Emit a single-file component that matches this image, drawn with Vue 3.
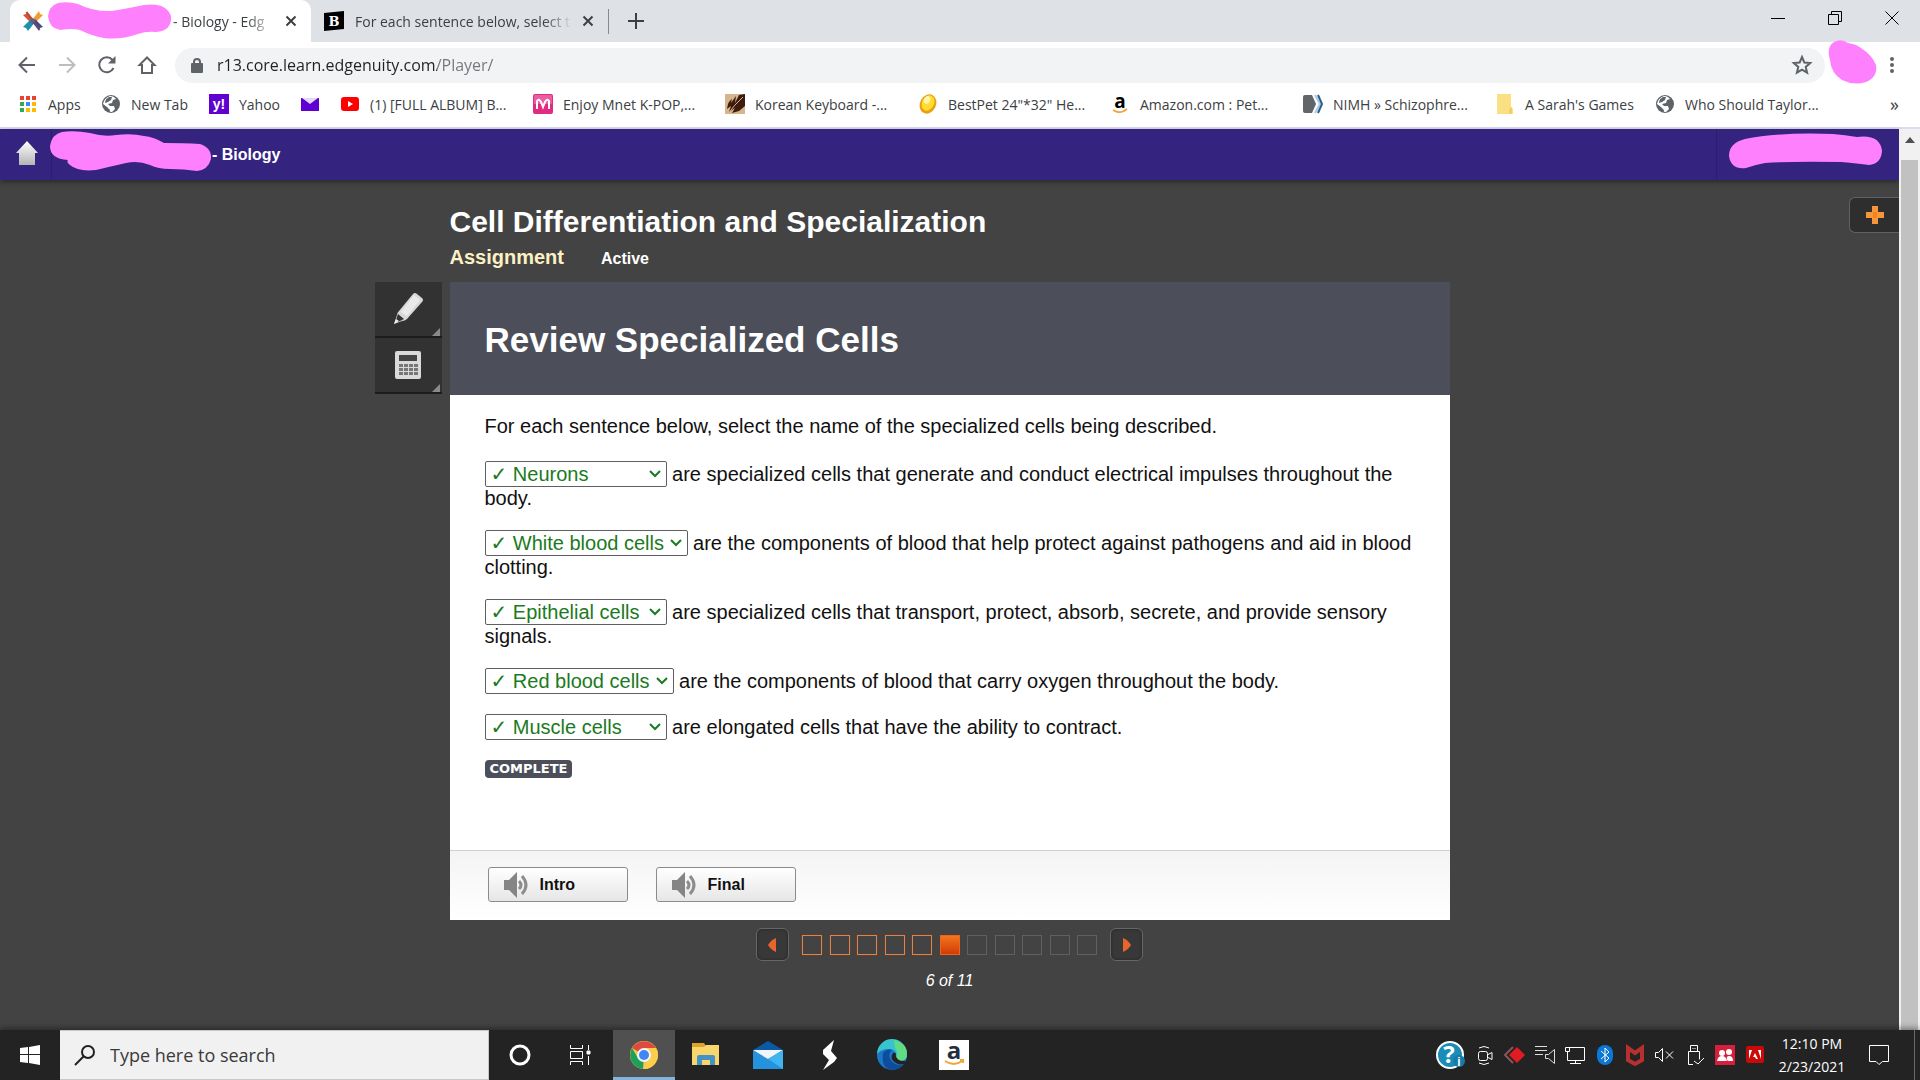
<template>
  <div class="screen">
    <div class="tabs">
      <div class="tab tab--active">
        <svg class="tab__icon" width="22" height="22" viewBox="0 0 22 22">
          <path d="M1 5l3-1 1-3 7 9-3 3z" fill="#d9532f" />
          <path d="M17 1l1 3 3 1-8 8-3-3z" fill="#f39a35" />
          <path d="M1 17l8-8 4 3-7 9-2-3z" fill="#1f8fae" />
          <path d="M10 12l3-3 8 8-3 1-1 3z" fill="#4a4b7c" />
          <path d="M4 2l14 18" stroke="#8a4660" />
          <path d="M9 9l2-1 2 3-2 3-3-2z" fill="#5d5f86" />
        </svg>
        <svg class="blob blob--tab" width="124" height="38" viewBox="0 0 124 38">
          <path
            d="M10 1Q20-1 30 2Q46 10 64 9Q82 6 96 3Q118 0 123 14Q124 29 108 30Q98 29 90 32Q72 38 56 36Q44 34 32 28Q24 26 12 28Q1 26 0 14Q1 4 10 1z"
          />
        </svg>
        <span class="tab__title tab__title--first">- Biology - Edg</span>
        <button class="icon__btn tab__close" aria-label="Close Biology tab">
          <svg width="12" height="12" viewBox="0 0 12 12">
            <path d="M1.500 1.500l9 9M10.500 1.500l-9 9" stroke="#3c4043" stroke-width="2" />
          </svg>
        </button>
      </div>
      <div class="tab">
        <svg class="tab__icon" width="22" height="22" viewBox="0 0 22 22">
          <path d="M1 3l20-2v18l-20 2z" fill="#000" />
          <text x="11" y="16" class="glyph glyph--slab" fill="#fff">B</text>
        </svg>
        <span class="tab__title">For each sentence below, select t</span>
        <button class="icon__btn tab__close" aria-label="Close search tab">
          <svg width="12" height="12" viewBox="0 0 12 12">
            <path d="M1.500 1.500l9 9M10.500 1.500l-9 9" stroke="#3c4043" stroke-width="2" />
          </svg>
        </button>
      </div>
      <button class="icon__btn tab__new" aria-label="New tab">
        <svg width="16" height="16" viewBox="0 0 16 16">
          <path d="M8 0v16M0 8h16" stroke="#3c4043" stroke-width="2" />
        </svg>
      </button>
      <div class="window__controls">
        <button class="icon__btn" aria-label="Minimize">
          <svg width="14" height="14" viewBox="0 0 14 14">
            <path d="M0 7.500h14" stroke="#000" />
          </svg>
        </button>
        <button class="icon__btn" aria-label="Restore">
          <svg width="14" height="14" viewBox="0 0 14 14" fill="none" stroke="#000">
            <path d="M.5 3.500h10v10h-10zM3.500 3v-2.500h10v10h-3" />
          </svg>
        </button>
        <button class="icon__btn" aria-label="Close window">
          <svg width="14" height="14" viewBox="0 0 14 14">
            <path d="M.5.5l13 13M13.500.5l-13 13" stroke="#000" />
          </svg>
        </button>
      </div>
    </div>

    <div class="toolbar">
      <button class="icon__btn nav__btn" aria-label="Back">
        <svg width="18" height="18" viewBox="0 0 18 18" fill="none" stroke="#5f6368" stroke-width="2">
          <path d="M17 9H2M9 1.500L1.500 9 9 16.500" />
        </svg>
      </button>
      <button class="icon__btn nav__btn" aria-label="Forward">
        <svg width="18" height="18" viewBox="0 0 18 18" fill="none" stroke="#bcbfc2" stroke-width="2">
          <path d="M1 9h15M9 1.500L16.500 9 9 16.500" />
        </svg>
      </button>
      <button class="icon__btn nav__btn" aria-label="Reload">
        <svg width="18" height="18" viewBox="0 0 18 18" fill="none">
          <path d="M15.500 12A7.500 7.500 0 1 1 14.500 4" stroke="#5f6368" stroke-width="2" />
          <path d="M17.500 0v7.500H10z" fill="#5f6368" />
        </svg>
      </button>
      <button class="icon__btn nav__btn" aria-label="Home">
        <svg width="18" height="18" viewBox="0 0 18 18" fill="none" stroke="#5f6368" stroke-width="2">
          <path d="M9 1.500L1.500 9H4v8h10V9h2.500z" />
        </svg>
      </button>
      <div class="omnibox">
        <svg width="12" height="15" viewBox="0 0 12 15">
          <rect y="5" width="12" height="10" rx="1" fill="#5f6368" />
          <path d="M3 6V4a3 3 0 0 1 6 0v2" fill="none" stroke="#5f6368" stroke-width="2" />
        </svg>
        <input v-model="url" class="omnibox__input" type="text" aria-label="Address" spellcheck="false" />
        <button class="icon__btn" aria-label="Bookmark this page">
          <svg width="20" height="20" viewBox="0 0 20 20">
            <path
              d="M10 2l2.300 5.500 5.900.5-4.500 3.900 1.400 5.800L10 14.600l-5.100 3.100 1.400-5.800L1.800 8l5.900-.5z"
              fill="none"
              stroke="#5f6368"
              stroke-width="2"
            />
          </svg>
        </button>
      </div>
      <svg class="blob blob--avatar" width="50" height="44" viewBox="0 0 50 44">
        <path d="M6 2Q13-2 20 3Q28 4 33 8Q44 15 48 25Q50 37 38 42Q26 46 14 40Q3 33 2 20Q-2 7 6 2z" />
      </svg>
      <button class="icon__btn" aria-label="Menu">
        <svg width="6" height="18" viewBox="0 0 6 18" fill="#5f6368">
          <circle cx="3" cy="3" r="2" />
          <circle cx="3" cy="9" r="2" />
          <circle cx="3" cy="15" r="2" />
        </svg>
      </button>
    </div>

    <nav class="bookmarks">
      <a
        v-for="mark in bookmarks"
        :key="mark.icon + mark.text"
        class="bookmark"
        href="#"
        :aria-label="mark.text || 'Mail'"
        :style="{ width: mark.width + 'px' }"
      >
        <svg class="bookmark__icon" width="20" height="20" viewBox="0 0 20 20">
          <template v-if="mark.icon == 'apps'">
            <rect v-for="(c, i) in appColors" :key="i" :x="2 + (i % 3) * 6" :y="2 + Math.floor(i / 3) * 6" width="4" height="4" :fill="c" />
          </template>
          <template v-else-if="mark.icon == 'globe'">
            <circle cx="10" cy="10" r="9" fill="#5f6368" />
            <path d="M9 2q4 0 6 3l-3 1-1 3-4 1 2 2h4l1 3-3 3q-3 0-2-2l-3-3-4-3q1-6 7-8z" fill="#fff" />
            <path d="M8 3h3l-1 3-3 2-3 1q0-4 4-6z" fill="#5f6368" />
          </template>
          <template v-else-if="mark.icon == 'yahoo'">
            <rect width="20" height="20" fill="#5f01d1" />
            <text x="10" y="15" class="glyph glyph--y" fill="#fff">y!</text>
          </template>
          <template v-else-if="mark.icon == 'mail'">
            <path d="M1 4h18v13H1z" fill="#5f01d1" />
            <path d="M2 4h16l-8 6z" fill="#e4d8f8" />
          </template>
          <template v-else-if="mark.icon == 'youtube'">
            <rect x="1" y="3" width="18" height="14" rx="3" fill="#f00" />
            <path d="M8 7l5 3-5 3z" fill="#fff" />
          </template>
          <template v-else-if="mark.icon == 'mnet'">
            <rect width="20" height="20" rx="2" fill="#e12a82" />
            <rect x="1" y="1" width="18" height="9" rx="1" fill="#ec5ba3" />
            <path d="M4 15V7q2-3 4 1l2 5 2-5q2-4 4-1v8" fill="none" stroke="#fff" stroke-width="2" />
          </template>
          <template v-else-if="mark.icon == 'feather'">
            <rect width="20" height="20" fill="#d8b48c" />
            <path d="M20 0v12l-6 5-7 2 3-5-6 4 2-6-4 3Q3 7 7 5L6 9l5-7-1 7 4-8z" fill="#3b1c0f" />
            <path d="M3 20Q9 11 18 3" stroke="#d8b48c" fill="none" />
          </template>
          <template v-else-if="mark.icon == 'gold'">
            <ellipse cx="10" cy="10" rx="8" ry="10" fill="#e9a013" transform="rotate(28 10 10)" />
            <ellipse cx="10" cy="9" rx="6" ry="8" fill="#ffdc2e" transform="rotate(28 10 9)" />
            <ellipse cx="9" cy="6" rx="3" ry="4" fill="#fff6a8" transform="rotate(28 9 6)" />
          </template>
          <template v-else-if="mark.icon == 'amazon'">
            <text x="10" y="14" class="glyph glyph--a" fill="#000">a</text>
            <path d="M3 16q7 5 14-1" stroke="#f0a63a" stroke-width="2" fill="none" />
          </template>
          <template v-else-if="mark.icon == 'nimh'">
            <path d="M0 3q0-2 2-2h7l4 9-4 9H2q-2 0-2-2z" fill="#636569" />
            <path d="M12 1l5 9-5 9" fill="none" stroke="#a9cbe6" stroke-width="2" />
            <path d="M15 1l4 9-4 9" fill="none" stroke="#2d5d8a" stroke-width="2" />
          </template>
          <template v-else>
            <path d="M2 0h14v13l2 2v5H2z" fill="#fbe083" />
            <path d="M14 20v-5l3-2v7z" fill="#f3cf62" />
          </template>
        </svg>
        <span v-if="mark.text">{{ mark.text }}</span>
      </a>
      <button class="icon__btn bookmarks__more" aria-label="More bookmarks">»</button>
    </nav>

    <div class="viewport">
      <div class="page">
        <header class="top">
          <a class="top__home" href="#" aria-label="Home">
            <svg width="24" height="26" viewBox="0 0 24 26">
              <defs>
                <linearGradient id="silver" x1="0" y1="0" x2="0" y2="1">
                  <stop offset="0" stop-color="#fff" />
                  <stop offset="1" stop-color="#b4b4b4" />
                </linearGradient>
              </defs>
              <path d="M12 1l11 12h-3v12H4V13H1z" fill="url(#silver)" />
            </svg>
          </a>
          <svg class="blob blob--name" width="162" height="40" viewBox="0 0 162 40">
            <path
              d="M12 1Q24-1 40 2Q54 6 66 4Q82 2 94 5Q104 6 114 12Q134 12 150 13Q162 17 161 28Q158 39 147 40Q134 38 120 38Q108 38 100 34Q88 29 76 32Q58 36 46 39Q28 41 20 34Q16 31 18 29Q0 28 0 15Q2 3 12 1z"
            />
          </svg>
          <span class="top__course">- Biology</span>
          <div class="top__user">
            <svg class="blob" width="153" height="36" viewBox="0 0 153 36">
              <path d="M16 6Q50-1 104 1Q116 2 128 4Q151 1 153 18Q152 31 140 32Q124 30 112 29Q62 28 36 30Q25 32 17 35Q2 37 0 23Q0 10 16 6z" />
            </svg>
          </div>
        </header>

        <main class="lesson">
          <div class="lesson__heading">
            <h1>Cell Differentiation and Specialization</h1>
            <div class="lesson__meta">
              <strong class="lesson__type">Assignment</strong>
              <strong class="lesson__state">Active</strong>
            </div>
          </div>

          <button class="lesson__add" aria-label="Open panel">
            <svg width="18" height="18" viewBox="0 0 18 18">
              <path d="M6 0h6v6h6v6h-6v6H6v-6H0V6h6z" fill="#f3973c" />
              <path d="M7 6h4v6H7z" fill="#f58220" />
            </svg>
          </button>

          <div class="tools">
            <button class="tool" aria-label="Highlighter">
              <svg width="32" height="34" viewBox="0 0 32 34">
                <path d="M21 2q2-2 4 0l5 4q2 2 0 4L15 27q-2 2-5 2l-8 3 3-9q0-2 2-4z" fill="#d8d8d8" />
                <path d="M22 3l6 5-13 16-6-4z" fill="#e9e9e9" />
                <path d="M6 22l6 5-6 3-2-2z" fill="#333" />
                <path d="M4 27l3 2-5 3z" fill="#eee" />
              </svg>
            </button>
            <button class="tool" aria-label="Calculator">
              <svg width="28" height="30" viewBox="0 0 28 30">
                <rect x="1" y="1" width="26" height="28" rx="2" fill="#dadada" />
                <rect x="5" y="5" width="18" height="6" fill="#444" />
                <rect v-for="i in 12" :key="i" :x="5 + ((i - 1) % 4) * 5" :y="14 + Math.floor((i - 1) / 4) * 4" width="4" height="3" fill="#777" />
              </svg>
            </button>
          </div>

          <section class="panel">
            <div class="panel__header">
              <h2>Review Specialized Cells</h2>
            </div>
            <div class="panel__body">
              <p class="prompt">For each sentence below, select the name of the specialized cells being described.</p>
              <p v-for="(row, i) in rows" :key="i">
                <select v-model="row.answer" class="answer" :class="`answer--${row.size}`" :aria-label="`Answer ${i + 1}`">
                  <option v-for="name in cells" :key="name" :value="name">✓ {{ name }}</option>
                </select>
                {{ row.text }}
              </p>
              <div class="badge">COMPLETE</div>
            </div>
            <div class="panel__footer">
              <button v-for="clip in ['Intro', 'Final']" :key="clip" class="clip">
                <svg width="26" height="26" viewBox="0 0 26 26">
                  <path d="M0 8h5l8-8v26l-8-8H0z" fill="#858585" />
                  <path d="M15 9q4 4 0 8M18 4q8 9 0 18" fill="none" stroke="#8d8d8d" stroke-width="3" />
                </svg>
                {{ clip }}
              </button>
            </div>
          </section>

          <div class="pager">
            <div class="pager__row">
              <button class="pager__btn" aria-label="Previous">
                <svg width="9" height="14" viewBox="0 0 9 14"><path d="M8 0v14Q3 12 0 7q3-5 8-7z" fill="#e8662c" /></svg>
              </button>
              <div class="pager__steps">
                <button
                  v-for="step in 11"
                  :key="step"
                  class="step"
                  :class="{ 'step--done': step < current, 'step--current': step == current }"
                  :aria-label="`Go to ${step}`"
                  @click="current = step"
                ></button>
              </div>
              <button class="pager__btn" aria-label="Next">
                <svg width="9" height="14" viewBox="0 0 9 14"><path d="M1 0v14q5-2 8-7-3-5-8-7z" fill="#e8662c" /></svg>
              </button>
            </div>
            <div class="pager__count">{{ current }} of 11</div>
          </div>
        </main>
      </div>
      <div class="scrollbar">
        <svg width="21" height="31" viewBox="0 0 21 31"><path d="M6 14l5-6 5 6z" fill="#505050" /></svg>
        <div class="scrollbar__thumb"></div>
      </div>
    </div>

    <footer class="taskbar">
      <button class="icon__btn taskbar__start" aria-label="Start">
        <svg width="20" height="20" viewBox="0 0 20 20" fill="#fff">
          <path d="M0 3l8-1v7H0zM9 2l11-2v9H9zM0 10h8v8l-8-1zM9 10h11v10L9 18z" />
        </svg>
      </button>
      <label class="search">
        <svg width="20" height="20" viewBox="0 0 20 20" fill="none" stroke="#222" stroke-width="2">
          <circle cx="13" cy="7" r="6" />
          <path d="M8.500 11.500L0 20" />
        </svg>
        <input type="text" placeholder="Type here to search" aria-label="Search" />
      </label>
      <button v-for="app in apps" :key="app" class="icon__btn app" :class="{ 'app--active': app == 'Chrome' }" :aria-label="app">
        <svg width="30" height="30" viewBox="0 0 30 30">
          <circle v-if="app == 'Cortana'" cx="15" cy="15" r="9" fill="none" stroke="#fff" stroke-width="3" />
          <g v-else-if="app == 'Task view'" fill="none" stroke="#fff">
            <path d="M3.500 5v3.500h12V5M3.500 25v-3.500h12V25M3.500 11.500h12v7h-12zM21.500 5v5M21.500 16v9" />
            <path d="M20 11h3v3h-3z" fill="#fff" />
          </g>
          <template v-else-if="app == 'Chrome'">
            <circle cx="15" cy="15" r="14" fill="#f7c948" />
            <path d="M15 15L3 8A14 14 0 0 1 27 8z" fill="#dd4b3e" />
            <path d="M15 15l-1 14A14 14 0 0 1 3 8l6 10z" fill="#1fa05a" />
            <path d="M15 8h12A14 14 0 0 1 14 29l7-11z" fill="#fbcf4b" />
            <circle cx="15" cy="15" r="7" fill="#f4f4f4" />
            <circle cx="15" cy="15" r="5" fill="#4285f4" />
          </template>
          <template v-else-if="app == 'File Explorer'">
            <path d="M1 3h12l2 3h13v6H1z" fill="#dfa32a" />
            <path d="M1 7h12l2-2h13v20H1z" fill="#f9d56e" />
            <path d="M6 25v-8q0-2 2-2h14q2 0 2 2v8h-5v-5h-8v5z" fill="#4593c4" />
          </template>
          <template v-else-if="app == 'Mail'">
            <path d="M0 10l15-9 15 9-15 12z" fill="#0a5aa5" />
            <path d="M0 10h30L15 21z" fill="#f2f5f7" />
            <path d="M0 10l15 9 15-9v19H0z" fill="#2492dd" />
            <path d="M15 19l15-9v19z" fill="#40b4ef" />
          </template>
          <path v-else-if="app == 'Swift'" d="M19 0L8 10v4l6 6-6 10 11-8 3-4-6-7z" fill="#fff" />
          <template v-else-if="app == 'Edge'">
            <circle cx="15" cy="15" r="15" fill="#1b78c8" />
            <path d="M0 14A15 15 0 0 1 30 14q0 7-7 7-5 0-5-3 2-2 1-5-2-4-7-4Q4 9 0 14z" fill="#38c4ce" />
            <path d="M17 0q13 3 13 14 0 7-7 7-5 0-5-3 5-4 0-10z" fill="#60dc86" />
            <path d="M6 13q4-5 9-3-4 3-2 9 4 7 13 6-5 6-13 5-9-3-7-17z" fill="#0f4d9c" />
            <path d="M18 18q-1-1 1-2 1 5 8 5 3 0 2 2-5 3-10 0-7-4-3-10 3-1 3 2z" fill="#232323" />
          </template>
          <template v-else>
            <rect width="30" height="30" fill="#fff" />
            <text x="15" y="19" class="glyph glyph--big" fill="#232f3e">a</text>
            <path d="M6 21q9 6 17 0M21 20h3v3" stroke="#f0a63a" stroke-width="2" fill="none" />
          </template>
        </svg>
      </button>
      <div class="tray">
        <button v-for="item in tray" :key="item" class="icon__btn tray__item" :aria-label="item">
          <svg width="30" height="30" viewBox="0 0 30 30">
            <template v-if="item == 'Help'">
              <circle cx="15" cy="15" r="13" fill="#1b8cb8" stroke="#fff" stroke-width="2" />
              <text x="14" y="23" class="glyph glyph--big" fill="#fff">?</text>
              <circle cx="24" cy="21" r="6" fill="#167ba6" />
              <text x="24" y="26" class="glyph glyph--i" fill="#fff">i</text>
            </template>
            <g v-else-if="item == 'Meet now'" fill="none" stroke="#fff">
              <rect x="8.500" y="11.500" width="9" height="9" rx="2" />
              <path d="M18 14.500l4-2v7l-4-2M9 8q5-3 10 0M9 23q5 3 10 0" />
            </g>
            <template v-else-if="item == 'Radeon'">
              <path d="M13 7l-8 8 8 8" fill="none" stroke="#8b5555" stroke-width="2" />
              <path d="M17 7l8 8-8 8-8-8z" fill="#e01b22" />
            </template>
            <path v-else-if="item == 'Sound list'" d="M5 6.500h12M5 10.500h12M5 14.500h8M15.500 14.500h3l6-5v14l-6-5h-3z" fill="none" stroke="#ddd" />
            <path v-else-if="item == 'Network'" d="M9 7.500h15.500v13h-17v-6M15.500 21v3M10 23.500h11M5.500 7.500h4v4h-4zM7.500 12v3" fill="none" stroke="#fff" />
            <template v-else-if="item == 'Bluetooth'">
              <rect x="7" y="5" width="16" height="20" rx="8" fill="#0b78d7" />
              <path d="M11 11l8 7-4 4V8l4 4-8 7" fill="none" stroke="#fff" />
            </template>
            <path v-else-if="item == 'McAfee'" d="M8 8l7 5 7-5v12l-7 4-7-4z" fill="none" stroke="#b5302f" stroke-width="4" />
            <path v-else-if="item == 'Volume'" d="M5.500 12.500h3l4-4v13l-4-4h-3zM16 11.500l7 7M23 11.500l-7 7" fill="none" stroke="#fff" />
            <path v-else-if="item == 'USB'" d="M10.500 5.500h7v6h-7zM8.500 11.500h11v8M13 24.500H8.500v-13M13 8v1M15 8v1M14 21l4 3 6-6" fill="none" stroke="#fff" />
            <template v-else-if="item == 'People'">
              <rect x="5" y="5" width="20" height="20" fill="#d51f3c" />
              <circle cx="12" cy="13" r="3" fill="#fff" />
              <circle cx="19" cy="12" r="3" fill="#fff" />
              <path d="M7 21q1-5 5-5t5 5zM17 20q-1-4 2-4 4 0 4 5h-5z" fill="#fff" />
            </template>
            <template v-else>
              <rect x="6" y="6" width="18" height="17" rx="2" fill="#c80a0a" />
              <path d="M9 19V10h3zM21 19V10h-3zM15 13l3 6h-2l-1-2h-2z" fill="#fff" />
            </template>
          </svg>
        </button>
        <div class="clock">
          <span>12:10 PM</span>
          <span>2/23/2021</span>
        </div>
        <button class="icon__btn notice" aria-label="Notifications">
          <svg width="20" height="20" viewBox="0 0 20 20">
            <path d="M.5.5h19v16h-6L10 19.500 7 16.500H.5z" fill="none" stroke="#fff" />
          </svg>
        </button>
        <div class="desktop"></div>
      </div>
    </footer>
  </div>
</template>

<script setup>
import { ref } from "vue";

const url = ref("r13.core.learn.edgenuity.com/Player/");
const current = ref(6);

const appColors = ["#ea4335", "#ea4335", "#ea4335", "#34a853", "#4285f4", "#fbbc05", "#34a853", "#fbbc05", "#fbbc05"];

const bookmarks = [
  { icon: "apps", text: "Apps", width: 83 },
  { icon: "globe", text: "New Tab", width: 108 },
  { icon: "yahoo", text: "Yahoo", width: 91 },
  { icon: "mail", text: "", width: 40 },
  { icon: "youtube", text: "(1) [FULL ALBUM] B...", width: 193 },
  { icon: "mnet", text: "Enjoy Mnet K-POP,...", width: 192 },
  { icon: "feather", text: "Korean Keyboard -...", width: 193 },
  { icon: "gold", text: 'BestPet 24"*32" He...', width: 192 },
  { icon: "amazon", text: "Amazon.com : Pet...", width: 193 },
  { icon: "nimh", text: "NIMH » Schizophre...", width: 192 },
  { icon: "folder", text: "A Sarah's Games", width: 160 },
  { icon: "globe", text: "Who Should Taylor...", width: 190 },
];

const cells = ["Neurons", "White blood cells", "Epithelial cells", "Red blood cells", "Muscle cells"];

const rows = ref([
  {
    answer: "Neurons",
    size: "small",
    text: "are specialized cells that generate and conduct electrical impulses throughout the body.",
  },
  {
    answer: "White blood cells",
    size: "large",
    text: "are the components of blood that help protect against pathogens and aid in blood clotting.",
  },
  {
    answer: "Epithelial cells",
    size: "small",
    text: "are specialized cells that transport, protect, absorb, secrete, and provide sensory signals.",
  },
  {
    answer: "Red blood cells",
    size: "medium",
    text: "are the components of blood that carry oxygen throughout the body.",
  },
  {
    answer: "Muscle cells",
    size: "small",
    text: "are elongated cells that have the ability to contract.",
  },
]);

const apps = ["Cortana", "Task view", "Chrome", "File Explorer", "Mail", "Swift", "Edge", "Amazon"];

const tray = [
  "Help",
  "Meet now",
  "Radeon",
  "Sound list",
  "Network",
  "Bluetooth",
  "McAfee",
  "Volume",
  "USB",
  "People",
  "Adobe",
];
</script>

<style>
body {
  background-color: #434343;
}
</style>

<style scoped>
* {
  box-sizing: border-box;
}

svg {
  overflow: visible;
}

.screen {
  min-height: 100vh;
  display: flex;
  flex-direction: column;
  font-family: "Open Sans", "Noto Sans", sans-serif;
  font-size: 14px;
  color: #3c4043;
}

.icon__btn {
  display: flex;
  align-items: center;
  justify-content: center;
  padding: 0;
  border: 0;
  background: none;
  font: inherit;
  color: inherit;
}

.blob {
  flex: none;
  fill: #ff80fc;
}

.glyph {
  font-family: "Liberation Sans", sans-serif;
  font-weight: bold;
  text-anchor: middle;
}
.glyph--slab {
  font-family: "DejaVu Serif", serif;
  font-size: 13px;
}
.glyph--y {
  font-size: 14px;
}
.glyph--a {
  font-family: "Open Sans", sans-serif;
  font-size: 19px;
}
.glyph--big {
  font-family: "Open Sans", sans-serif;
  font-size: 24px;
}
.glyph--i {
  font-size: 12px;
}

.tabs {
  height: 42px;
  padding-left: 10px;
  display: flex;
  background-color: #dee1e6;
}

.tab {
  width: 298px;
  padding: 0 14px 0 12px;
  display: flex;
  align-items: center;
}
.tab:nth-child(2) {
  border-right: 1px solid transparent;
  border-image: linear-gradient(transparent 10px, #85888c 10px, #85888c 33px, transparent 33px) 1;
}
.tab--active {
  width: 301px;
  background-color: #fff;
  border-radius: 10px 10px 0 0;
}
.tab__icon {
  flex: none;
}
.tab__title {
  flex: 1;
  margin-left: 10px;
  white-space: nowrap;
  -webkit-mask-image: linear-gradient(to left, transparent, #000 28px);
  mask-image: linear-gradient(to left, transparent, #000 28px);
}
.tab__title--first {
  margin-left: 1px;
}
.blob--tab {
  margin-left: 4px;
}
.tab__close {
  width: 12px;
  margin-left: 10px;
}
.tab__new {
  width: 54px;
}

.window__controls {
  margin-left: auto;
  display: flex;
}
.window__controls .icon__btn {
  width: 57px;
  height: 36px;
}

.toolbar {
  height: 46px;
  padding: 0 25px 0 7px;
  display: flex;
  align-items: center;
  background-color: #fff;
}
.nav__btn {
  width: 40px;
}
.omnibox {
  flex: 1;
  height: 35px;
  margin-left: 8px;
  padding: 0 13px 0 16px;
  display: flex;
  align-items: center;
  border-radius: 18px;
  background-color: #f1f3f4;
}
.omnibox__input {
  flex: 1;
  min-width: 0;
  margin-left: 14px;
  padding: 0;
  border: 0;
  outline: 0;
  font-family: "Open Sans", sans-serif;
  font-size: 16px;
  color: transparent;
  caret-color: #202124;
  background: linear-gradient(to right, #202124 220px, #73777b 220px);
  -webkit-background-clip: text;
  background-clip: text;
}
.blob--avatar {
  margin: -6px 11px 0 3px;
}

.bookmarks {
  height: 41px;
  padding: 0 21px 7px 18px;
  display: flex;
  align-items: center;
  background-color: #fff;
  border-bottom: 2px solid #dcdcec;
}
.bookmark {
  flex: 0 1 auto;
  display: flex;
  align-items: center;
  column-gap: 10px;
  white-space: nowrap;
  color: inherit;
  text-decoration: none;
}
.bookmark__icon {
  flex: none;
}
.bookmarks__more {
  margin-left: auto;
  font-size: 18px;
}

.viewport {
  flex: 1;
  display: flex;
}
.page {
  flex: 1;
  min-width: 0;
  font-family: "Liberation Sans", Arial, sans-serif;
  background-color: #434343;
}

.top {
  height: 51px;
  display: flex;
  align-items: center;
  background-color: #35247f;
  box-shadow: 0 2px 5px rgba(0, 0, 0, 0.4);
  color: #fff;
}
.top__home {
  width: 52px;
  height: 100%;
  padding: 11px 0 0 15px;
  border-right: 1px solid #2c1d70;
}
.blob--name {
  margin: -8px 0 0 -2px;
}
.top__course {
  font-size: 16px;
  font-weight: bold;
}
.top__user {
  width: 183px;
  height: 100%;
  margin-left: auto;
  padding: 4px 0 0 12px;
  border-left: 1px solid #2c1d70;
}

.lesson {
  padding-top: 17px;
  display: grid;
  grid-template-columns: 1fr minmax(0, 1000px) 1fr;
}
.lesson__heading {
  grid-column: 2;
  padding: 7px 0 11px;
  color: #fff;
}
.lesson__heading h1 {
  margin: 0;
  font-size: 30px;
  line-height: 36px;
}
.lesson__meta {
  margin-top: 5px;
  display: flex;
  align-items: baseline;
  column-gap: 37px;
  line-height: 24px;
}
.lesson__type {
  font-size: 20px;
  color: #fdf0c4;
}
.lesson__state {
  font-size: 16px;
}
.lesson__add {
  grid-column: 3;
  justify-self: end;
  width: 50px;
  height: 36px;
  padding: 0;
  display: flex;
  align-items: center;
  justify-content: center;
  border: 1px solid #5c6268;
  border-right: 0;
  border-radius: 6px 0 0 6px;
  background-color: #2e2e2e;
}

.tools {
  grid-column: 1;
  justify-self: end;
  align-self: start;
  width: 67px;
  margin-right: 8px;
}
.tool {
  position: relative;
  width: 100%;
  height: 56px;
  padding: 0;
  display: flex;
  align-items: center;
  justify-content: center;
  border: 0;
  border-bottom: 2px solid #1c1c1c;
  background-color: #323232;
}
.tool::after {
  content: "";
  position: absolute;
  right: 2px;
  bottom: 0;
  border: 4px solid transparent;
  border-right-color: #8a8a8a;
  border-bottom-color: #8a8a8a;
}

.panel {
  grid-column: 2;
  background-color: #fff;
  color: #111;
}
.panel__header {
  padding: 38px 35px 35px;
  background-color: #4c4f59;
  color: #fff;
}
.panel__header h2 {
  margin: 0;
  font-size: 35px;
  line-height: 40px;
}
.panel__body {
  min-height: 455px;
  padding: 20px 35px;
  font-size: 20px;
  line-height: 23px;
}
.panel__body p {
  margin: 0 0 20px;
}
.panel__body .prompt {
  margin-bottom: 23px;
}

.answer {
  height: 26px;
  padding: 0 20px 0 5px;
  border: 1px solid #5f5f5f;
  border-radius: 2px;
  appearance: none;
  background: #fff
    url("data:image/svg+xml,%3Csvg xmlns='http://www.w3.org/2000/svg' width='12' height='8'%3E%3Cpath d='M1 1l5 5 5-5' fill='none' stroke='%231b7a22' stroke-width='2'/%3E%3C/svg%3E")
    no-repeat right 5px center;
  font-family: "Liberation Sans", "DejaVu Sans", sans-serif;
  font-size: 20px;
  color: #1b7a22;
}
.answer--small {
  width: 182px;
}
.answer--medium {
  width: 189px;
}
.answer--large {
  width: 203px;
}

.badge {
  width: fit-content;
  padding: 0 5px;
  border-radius: 4px;
  background-color: #4c4f59;
  font-family: "DejaVu Sans", sans-serif;
  font-size: 13px;
  font-weight: bold;
  line-height: 18px;
  color: #fff;
}

.panel__footer {
  padding: 16px 38px 18px;
  display: flex;
  column-gap: 28px;
  border-top: 1px solid #cdd3d1;
  background: linear-gradient(#f4f4f4, #fff);
}
.clip {
  width: 140px;
  height: 35px;
  padding: 0 15px;
  display: flex;
  align-items: center;
  column-gap: 10px;
  border: 1px solid #8c8c8c;
  border-radius: 3px;
  background: linear-gradient(#fff, #e6e6e6);
  font-family: inherit;
  font-size: 16px;
  font-weight: bold;
  color: #111;
}

.pager {
  grid-column: 2;
  padding-top: 8px;
  display: flex;
  flex-direction: column;
  align-items: center;
}
.pager__row {
  display: flex;
  align-items: center;
  column-gap: 13px;
}
.pager__btn {
  width: 33px;
  height: 33px;
  padding: 0;
  display: flex;
  align-items: center;
  justify-content: center;
  border: 1px solid #666;
  border-radius: 6px;
  background-color: #383838;
  box-shadow: inset 0 0 3px #222;
}
.pager__steps {
  width: 295px;
  display: flex;
  justify-content: space-between;
}
.step {
  width: 20px;
  height: 20px;
  padding: 0;
  border: 1px solid #606060;
  background: none;
}
.step--done {
  border-color: #d98550;
  box-shadow: 0 0 2px #8a3c10;
}
.step--current {
  border-color: #f0641a;
  background: linear-gradient(#f4751d, #cf3c06);
}
.pager__count {
  margin-top: 10px;
  font-size: 16px;
  font-style: italic;
  line-height: 20px;
  color: #fff;
}

.scrollbar {
  width: 21px;
  padding: 0 2px;
  display: flex;
  flex-direction: column;
  align-items: center;
  background-color: #f1f1f1;
}
.scrollbar__thumb {
  flex: 1;
  width: 100%;
  background-color: #c1c1c1;
}

.taskbar {
  height: 50px;
  display: flex;
  background-color: #232323;
  box-shadow: 0 -2px 6px rgba(0, 0, 0, 0.4);
  color: #fff;
}
.taskbar__start {
  width: 60px;
}
.search {
  width: 429px;
  padding: 0 15px;
  display: flex;
  align-items: center;
  column-gap: 15px;
  border: 1px solid #c8c8c8;
  border-left: 0;
  background-color: #f1f1f1;
}
.search input {
  flex: 1;
  min-width: 0;
  padding: 0;
  border: 0;
  outline: 0;
  background: none;
  font-family: "Open Sans", sans-serif;
  font-size: 18px;
}
.search input::placeholder {
  color: #3a3a3a;
}
.app {
  width: 62px;
}
.app--active {
  background-color: #505050;
  border-bottom: 3px solid #81b4de;
  padding-top: 3px;
}

.tray {
  margin-left: auto;
  display: flex;
}
.tray__item {
  width: 30px;
}
.tray__item:first-child {
  margin-right: 5px;
}
.clock {
  width: 84px;
  display: flex;
  flex-direction: column;
  align-items: center;
  justify-content: center;
  line-height: 23px;
}
.notice {
  width: 50px;
}
.desktop {
  width: 6px;
  margin-left: 10px;
  border-left: 1px solid #6a6a6a;
}
</style>
